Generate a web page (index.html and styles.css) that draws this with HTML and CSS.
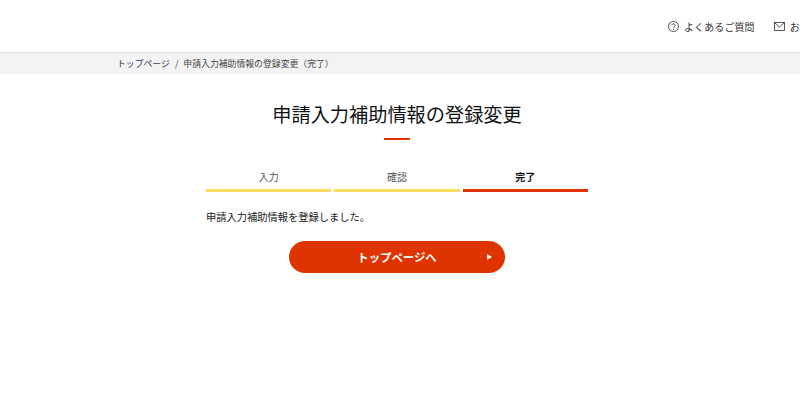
FILE: index.html
```html
<!DOCTYPE html>
<html lang="ja">
<head>
  <meta charset="UTF-8">
  <title>申請入力補助情報の登録変更</title>
  <link rel="stylesheet" href="styles.css">
</head>
<body>
  <header class="header">
    <a class="header-link" href="#">
      <svg class="header-icon" viewBox="0 0 12 12" width="11" height="11">
        <circle cx="6" cy="6" r="5.500" fill="none" stroke="#333" stroke-width=".9"/>
        <path d="M4.300 4.700c0-2.200 3.500-2.200 3.500-.1 0 1.300-1.800 1.400-1.800 2.900" fill="none" stroke="#333" stroke-width=".9"/>
        <circle cx="6" cy="9.100" r=".6" fill="#333"/>
      </svg>
      よくあるご質問
    </a>
    <a class="header-link" href="#">
      <svg class="header-icon" viewBox="0 0 12 10" width="11" height="9">
        <rect x=".5" y=".5" width="11" height="9" fill="none" stroke="#333" stroke-width=".9"/>
        <path d="M.5 .8 6 5.500 11.500 .8" fill="none" stroke="#333" stroke-width=".9"/>
      </svg>
      お問い合わせ
    </a>
  </header>
  <nav class="breadcrumb">
    <a class="breadcrumb-link" href="#">トップページ</a>
    <span class="breadcrumb-sep">/</span>
    <span>申請入力補助情報の登録変更（完了）</span>
  </nav>
  <main class="main">
    <h1 class="title">申請入力補助情報の登録変更</h1>
    <div class="title-bar"></div>
    <ol class="steps">
      <li class="step">入力</li>
      <li class="step">確認</li>
      <li class="step step-current">完了</li>
    </ol>
    <p class="message">申請入力補助情報を登録しました。</p>
    <a class="button" href="#">トップページへ</a>
  </main>
</body>
</html>
```

FILE: styles.css
```css
* {
  margin: 0;
  padding: 0;
  box-sizing: border-box;
  list-style: none;
}

html, body {
  height: 100%;
  overflow: hidden;
}

body {
  background: #fff;
  color: #222;
  font-family: "Noto Sans CJK JP", "Liberation Sans", sans-serif;
  font-size: 10px;
}

a {
  color: inherit;
  text-decoration: none;
}

.header {
  height: 53px;
  padding: 0 0 0 668px;
  display: flex;
  align-items: center;
  gap: 19px;
  border-bottom: 1px solid #e2e2e2;
  white-space: nowrap;
  flex-wrap: nowrap;
}

.header-link {
  display: flex;
  align-items: center;
  gap: 5px;
  flex-shrink: 0;
  color: #333;
  letter-spacing: .01em;
}

.header-icon {
  flex-shrink: 0;
}

.breadcrumb {
  height: 21px;
  padding-left: 117px;
  display: flex;
  align-items: center;
  gap: 5px;
  background: #f3f3f3;
  color: #444;
  font-size: 8.85px;
}

.breadcrumb-link {
  color: #33405c;
}

.main {
  width: 382px;
  margin-left: 206px;
  display: flex;
  flex-direction: column;
}

.title {
  margin-top: 25px;
  text-align: center;
  font-size: 19.2px;
  line-height: 30px;
  font-weight: 400;
  color: #111;
}

.title-bar {
  width: 26px;
  height: 2px;
  margin: 9px auto 0;
  background: #e03400;
}

.steps {
  margin-top: 25px;
  display: grid;
  grid-template-columns: repeat(3, 1fr);
  gap: 3px;
}

.step {
  height: 27px;
  padding-top: 4px;
  text-align: center;
  line-height: 15px;
  color: #555;
  border-bottom: 3px solid #fbdc62;
}

.step-current {
  color: #111;
  font-weight: 700;
  border-bottom-color: #e03400;
}

.message {
  margin-top: 16px;
  line-height: 17px;
  font-size: 10.25px;
}

.button {
  width: 216px;
  height: 32px;
  margin: 16px auto 0;
  position: relative;
  display: flex;
  align-items: center;
  justify-content: center;
  border-radius: 16px;
  background: #e03400;
  color: #fff;
  font-size: 11.4px;
  font-weight: 700;
}

.button::after {
  content: "";
  position: absolute;
  right: 13px;
  top: 13px;
  border-left: 5px solid #fff;
  border-top: 3px solid transparent;
  border-bottom: 3px solid transparent;
}
```
